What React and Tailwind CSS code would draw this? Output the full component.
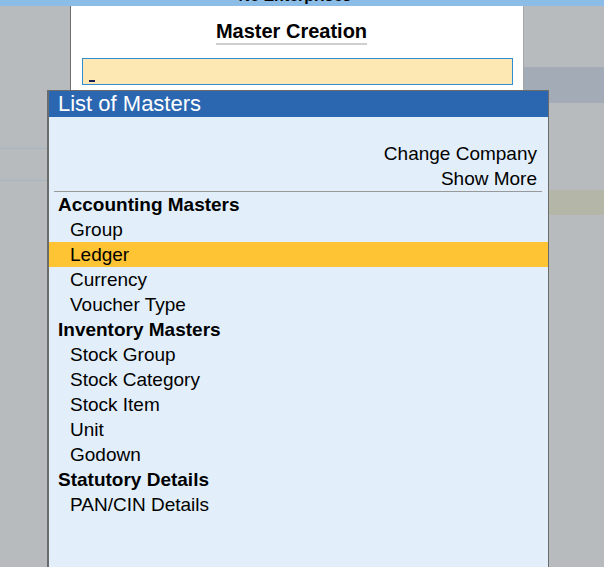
export default function App() {
  const rows = [
    { t: "Accounting Masters", h: true },
    { t: "Group" },
    { t: "Ledger", sel: true },
    { t: "Currency" },
    { t: "Voucher Type" },
    { t: "Inventory Masters", h: true },
    { t: "Stock Group" },
    { t: "Stock Category" },
    { t: "Stock Item" },
    { t: "Unit" },
    { t: "Godown" },
    { t: "Statutory Details", h: true },
    { t: "PAN/CIN Details" },
  ];
  return (
    <div className="relative w-[604px] h-[567px] overflow-hidden bg-[#b7bbbe] font-['Liberation_Sans',Arial,sans-serif] text-black">
      <div className="h-[6px] bg-[#8bbde6] overflow-hidden flex justify-center pr-[14px]">
        <div className="text-[16px] font-bold leading-[16px] -mt-[12px] whitespace-nowrap">Ne Enterprises</div>
      </div>
      <div className="flex h-[561px]">
        <div className="w-[70px] flex flex-col">
          <div className="h-[142px]" />
          <div className="h-[32px] border-t border-[#a6b6c2]" />
          <div className="border-t border-[#a6b6c2]" />
        </div>
        <div className="w-[454px] bg-white border-l border-l-[#6f6f6f] border-r border-r-[#a4a8ab] flex flex-col">
          <div className="flex justify-center pr-[11px] pt-[15px]">
            <div className="text-[20px] font-bold leading-[20px] pb-[2px] border-b-2 border-[#cfcfcf]">Master Creation</div>
          </div>
          <div className="mt-[13px] ml-[11px] mr-[10px] h-[27px] bg-[#fde7b3] border border-[#2e8fd4] flex items-end pl-[6px] pb-[2px]">
            <div className="w-[6px] h-[2px] bg-[#1b2150]" />
          </div>
        </div>
        <div className="flex-1 flex flex-col">
          <div className="h-[61px]" />
          <div className="h-[36px] bg-[#a3acb6]" />
          <div className="h-[87px]" />
          <div className="h-[25px] bg-[#b4b6a7]" />
        </div>
      </div>

      <div className="absolute left-[47px] top-[90px] w-[502px] h-[490px] border-l-2 border-r border-t border-[#6b6b6b] bg-[#e2effb] flex flex-col">
        <div className="h-[26px] bg-[#2b67b1] text-white text-[22px] leading-[26px] pl-[9px] whitespace-nowrap">List of Masters</div>
        <div className="pt-[24px] flex flex-col text-[19px] leading-[25px]">
          <div className="h-[25px] text-right pr-[11px]">Change Company</div>
          <div className="h-[25px] text-right pr-[11px]">Show More</div>
          <div className="h-[1px] bg-[#999999] ml-[5px] mr-[6px]" />
          {rows.map((r) => (
            <div
              key={r.t}
              className={
                "h-[25px] whitespace-nowrap " +
                (r.h ? "font-bold pl-[9px] " : "pl-[21px] ") +
                (r.sel ? "bg-[#ffc433]" : "")
              }
            >
              {r.t}
            </div>
          ))}
        </div>
      </div>
    </div>
  );
}
